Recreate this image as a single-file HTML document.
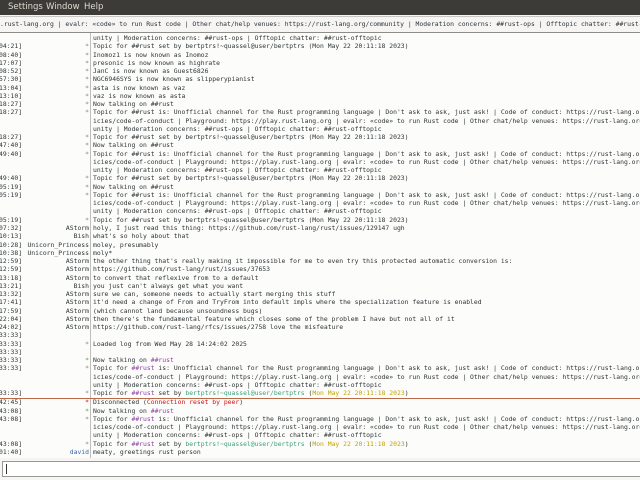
<!DOCTYPE html>
<html><head><meta charset="utf-8"><style>
*{margin:0;padding:0;box-sizing:border-box}
body{width:640px;height:480px;overflow:hidden;background:#f6f5f4;position:relative;font-family:"DejaVu Sans Mono","Liberation Mono",monospace;font-size:6.4px;color:#2e3436}
#menu{position:absolute;left:0;top:0;width:640px;height:15px;background:#3c3b37;color:#dfdbd2;font-family:"DejaVu Sans","Liberation Sans",sans-serif;font-size:8.5px;line-height:15px}
#menu span{position:absolute;top:0}
#topic{position:absolute;left:0;top:16px;width:640px;height:17px;background:#f6f5f4;border-top:1px solid #c8c6c2;border-bottom:1px solid #8e8c88;line-height:15px;white-space:pre;overflow:hidden;padding-left:0}
#chat{position:absolute;left:0;top:33px;width:640px;height:425px;background:#fcfcfb;overflow:hidden}
#vl{position:absolute;left:90px;top:0;width:1px;height:425px;background:#c0bebb}
.l{position:absolute;left:0;height:8.26px;width:640px;white-space:pre;line-height:8.26px}
.t{position:absolute;left:-1px}
.n{position:absolute;right:551px;text-align:right}
.m{position:absolute;left:93px}
.s{color:#888}
.p{color:#8e3fa2}
.g{color:#3a9f7e}
.y{color:#c4a000}
.r{color:#d01010}
.gs{color:#4caa40}
.rs{color:#d01010}
.b{color:#3465a4}
#sep{position:absolute;left:0;top:364.5px;width:640px;height:1px;background:#b86a4a}
#inp{position:absolute;left:2px;top:461px;width:638px;height:16px;background:#fff;border:1px solid #9a9894;border-right:none}
#cur{position:absolute;left:3px;top:2px;width:1px;height:10px;background:#333}
</style></head><body>
<div id="menu"><span style="left:8px">Settings</span><span style="left:46px">Window</span><span style="left:84px">Help</span></div>
<div id="topic">.rust-lang.org | evalr: «code» to run Rust code | Other chat/help venues: https://rust-lang.org/community | Moderation concerns: ##rust-ops | Offtopic chatter: ##rust-offtopic</div>
<div id="chat">
<div id="vl"></div>
<div id="sep"></div>
<div class="l" style="top:1px"><span class="m">unity | Moderation concerns: ##rust-ops | Offtopic chatter: ##rust-offtopic</span></div>
<div class="l" style="top:9.26px"><span class="t">04:21]</span><span class="n s">*</span><span class="m">Topic for ##rust set by bertptrs!~quassel@user/bertptrs (Mon May 22 20:11:18 2023)</span></div>
<div class="l" style="top:17.52px"><span class="t">08:40]</span><span class="n s">*</span><span class="m">Inomoz1 is now known as Inomoz</span></div>
<div class="l" style="top:25.78px"><span class="t">17:07]</span><span class="n s">*</span><span class="m">presonic is now known as highrate</span></div>
<div class="l" style="top:34.04px"><span class="t">08:52]</span><span class="n s">*</span><span class="m">JanC is now known as Guest6826</span></div>
<div class="l" style="top:42.3px"><span class="t">57:30]</span><span class="n s">*</span><span class="m">NGC6946SYS is now known as slipperypianist</span></div>
<div class="l" style="top:50.56px"><span class="t">13:04]</span><span class="n s">*</span><span class="m">asta is now known as vaz</span></div>
<div class="l" style="top:58.82px"><span class="t">13:10]</span><span class="n s">*</span><span class="m">vaz is now known as asta</span></div>
<div class="l" style="top:67.08px"><span class="t">18:27]</span><span class="n s">*</span><span class="m">Now talking on ##rust</span></div>
<div class="l" style="top:75.34px"><span class="t">18:27]</span><span class="n s">*</span><span class="m">Topic for ##rust is: Unofficial channel for the Rust programming language | Don't ask to ask, just ask! | Code of conduct: https://rust-lang.org/pol</span></div>
<div class="l" style="top:83.6px"><span class="m">icies/code-of-conduct | Playground: https://play.rust-lang.org | evalr: «code» to run Rust code | Other chat/help venues: https://rust-lang.org/comm</span></div>
<div class="l" style="top:91.86px"><span class="m">unity | Moderation concerns: ##rust-ops | Offtopic chatter: ##rust-offtopic</span></div>
<div class="l" style="top:100.12px"><span class="t">18:27]</span><span class="n s">*</span><span class="m">Topic for ##rust set by bertptrs!~quassel@user/bertptrs (Mon May 22 20:11:18 2023)</span></div>
<div class="l" style="top:108.38px"><span class="t">47:40]</span><span class="n s">*</span><span class="m">Now talking on ##rust</span></div>
<div class="l" style="top:116.64px"><span class="t">49:40]</span><span class="n s">*</span><span class="m">Topic for ##rust is: Unofficial channel for the Rust programming language | Don't ask to ask, just ask! | Code of conduct: https://rust-lang.org/pol</span></div>
<div class="l" style="top:124.9px"><span class="m">icies/code-of-conduct | Playground: https://play.rust-lang.org | evalr: «code» to run Rust code | Other chat/help venues: https://rust-lang.org/comm</span></div>
<div class="l" style="top:133.16px"><span class="m">unity | Moderation concerns: ##rust-ops | Offtopic chatter: ##rust-offtopic</span></div>
<div class="l" style="top:141.42px"><span class="t">49:40]</span><span class="n s">*</span><span class="m">Topic for ##rust set by bertptrs!~quassel@user/bertptrs (Mon May 22 20:11:18 2023)</span></div>
<div class="l" style="top:149.68px"><span class="t">05:19]</span><span class="n s">*</span><span class="m">Now talking on ##rust</span></div>
<div class="l" style="top:157.94px"><span class="t">05:19]</span><span class="n s">*</span><span class="m">Topic for ##rust is: Unofficial channel for the Rust programming language | Don't ask to ask, just ask! | Code of conduct: https://rust-lang.org/pol</span></div>
<div class="l" style="top:166.2px"><span class="m">icies/code-of-conduct | Playground: https://play.rust-lang.org | evalr: «code» to run Rust code | Other chat/help venues: https://rust-lang.org/comm</span></div>
<div class="l" style="top:174.46px"><span class="m">unity | Moderation concerns: ##rust-ops | Offtopic chatter: ##rust-offtopic</span></div>
<div class="l" style="top:182.72px"><span class="t">05:19]</span><span class="n s">*</span><span class="m">Topic for ##rust set by bertptrs!~quassel@user/bertptrs (Mon May 22 20:11:18 2023)</span></div>
<div class="l" style="top:190.98px"><span class="t">07:32]</span><span class="n">AStorm</span><span class="m">holy, I just read this thing: https://github.com/rust-lang/rust/issues/129147 ugh</span></div>
<div class="l" style="top:199.24px"><span class="t">10:13]</span><span class="n">Bish</span><span class="m">what's so holy about that</span></div>
<div class="l" style="top:207.5px"><span class="t">10:28]</span><span class="n">Unicorn_Princess</span><span class="m">moley, presumably</span></div>
<div class="l" style="top:215.76px"><span class="t">10:38]</span><span class="n">Unicorn_Princess</span><span class="m">moly*</span></div>
<div class="l" style="top:224.02px"><span class="t">12:59]</span><span class="n">AStorm</span><span class="m">the other thing that's really making it impossible for me to even try this protected automatic conversion is:</span></div>
<div class="l" style="top:232.28px"><span class="t">12:59]</span><span class="n">AStorm</span><span class="m">https://github.com/rust-lang/rust/issues/37653</span></div>
<div class="l" style="top:240.54px"><span class="t">13:18]</span><span class="n">AStorm</span><span class="m">to convert that reflexive from to a default</span></div>
<div class="l" style="top:248.8px"><span class="t">13:21]</span><span class="n">Bish</span><span class="m">you just can't always get what you want</span></div>
<div class="l" style="top:257.06px"><span class="t">13:32]</span><span class="n">AStorm</span><span class="m">sure we can, someone needs to actually start merging this stuff</span></div>
<div class="l" style="top:265.32px"><span class="t">17:41]</span><span class="n">AStorm</span><span class="m">it'd need a change of From and TryFrom into default impls where the specialization feature is enabled</span></div>
<div class="l" style="top:273.58px"><span class="t">17:59]</span><span class="n">AStorm</span><span class="m">(which cannot land because unsoundness bugs)</span></div>
<div class="l" style="top:281.84px"><span class="t">22:04]</span><span class="n">AStorm</span><span class="m">then there's the fundamental feature which closes some of the problem I have but not all of it</span></div>
<div class="l" style="top:290.1px"><span class="t">24:02]</span><span class="n">AStorm</span><span class="m">https://github.com/rust-lang/rfcs/issues/2758 love the misfeature</span></div>
<div class="l" style="top:298.36px"><span class="t">33:33]</span></div>
<div class="l" style="top:306.62px"><span class="t">33:33]</span><span class="n s">*</span><span class="m">Loaded log from Wed May 28 14:24:02 2025</span></div>
<div class="l" style="top:314.88px"><span class="t">33:33]</span></div>
<div class="l" style="top:323.14px"><span class="t">33:33]</span><span class="n gs">*</span><span class="m">Now talking on <span class="p">##rust</span></span></div>
<div class="l" style="top:331.4px"><span class="t">33:33]</span><span class="n s">*</span><span class="m">Topic for <span class="p">##rust</span> is: Unofficial channel for the Rust programming language | Don't ask to ask, just ask! | Code of conduct: https://rust-lang.org/pol</span></div>
<div class="l" style="top:339.66px"><span class="m">icies/code-of-conduct | Playground: https://play.rust-lang.org | evalr: «code» to run Rust code | Other chat/help venues: https://rust-lang.org/comm</span></div>
<div class="l" style="top:347.92px"><span class="m">unity | Moderation concerns: ##rust-ops | Offtopic chatter: ##rust-offtopic</span></div>
<div class="l" style="top:356.18px"><span class="t">33:33]</span><span class="n s">*</span><span class="m">Topic for <span class="p">##rust</span> set by <span class="g">bertptrs!~quassel@user/bertptrs</span> (<span class="y">Mon May 22 20:11:18 2023</span>)</span></div>
<div class="l" style="top:365.44px"><span class="t">42:45]</span><span class="n rs">*</span><span class="m">Disconnected (<span class="r">Connection reset by peer</span>)</span></div>
<div class="l" style="top:373.7px"><span class="t">43:08]</span><span class="n gs">*</span><span class="m">Now talking on <span class="p">##rust</span></span></div>
<div class="l" style="top:381.96px"><span class="t">43:08]</span><span class="n s">*</span><span class="m">Topic for <span class="p">##rust</span> is: Unofficial channel for the Rust programming language | Don't ask to ask, just ask! | Code of conduct: https://rust-lang.org/pol</span></div>
<div class="l" style="top:390.22px"><span class="m">icies/code-of-conduct | Playground: https://play.rust-lang.org | evalr: «code» to run Rust code | Other chat/help venues: https://rust-lang.org/comm</span></div>
<div class="l" style="top:398.48px"><span class="m">unity | Moderation concerns: ##rust-ops | Offtopic chatter: ##rust-offtopic</span></div>
<div class="l" style="top:406.74px"><span class="t">43:08]</span><span class="n s">*</span><span class="m">Topic for <span class="p">##rust</span> set by <span class="g">bertptrs!~quassel@user/bertptrs</span> (<span class="y">Mon May 22 20:11:18 2023</span>)</span></div>
<div class="l" style="top:415px"><span class="t">01:40]</span><span class="n b">david</span><span class="m">meaty, greetings rust person</span></div>
</div>
<div id="inp"><div id="cur"></div></div>
</body></html>
